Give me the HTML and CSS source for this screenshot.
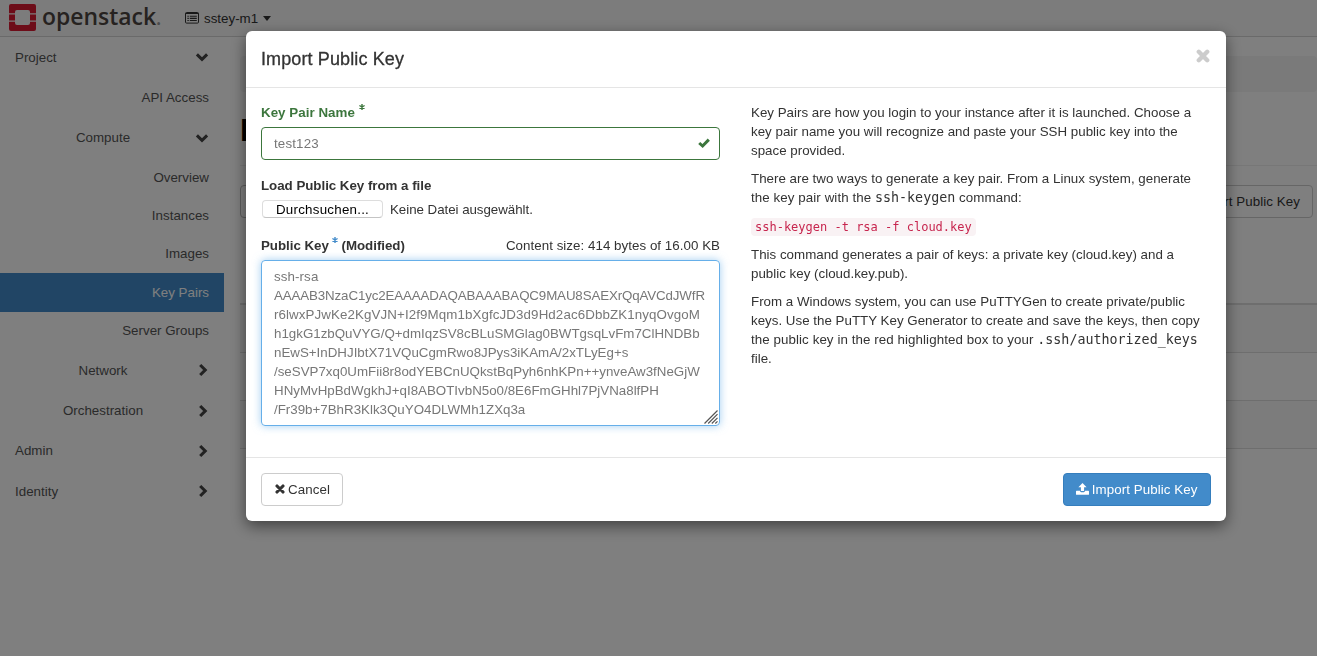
FILE: index.html
```html
<!DOCTYPE html>
<html lang="en">
<head>
<meta charset="utf-8">
<title>Key Pairs - OpenStack Dashboard</title>
<link rel="stylesheet" href="styles.css">
</head>
<body>
<svg class="defs" width="0" height="0">
  <symbol id="down" viewBox="0 0 14 10"><path d="M1.9 2.4 7 7.4 12.1 2.4" fill="none" stroke="currentColor" stroke-width="3"/></symbol>
  <symbol id="right" viewBox="0 0 10 14"><path d="M2.2 2 7.2 7 2.2 12" fill="none" stroke="currentColor" stroke-width="3.1"/></symbol>
  <symbol id="times" viewBox="0 0 14 14"><path d="M2.8 2.8 11.2 11.2M11.2 2.8 2.8 11.2" fill="none" stroke="currentColor" stroke-width="4.4" stroke-linecap="round"/></symbol>
  <symbol id="star" viewBox="0 0 6 6"><path d="M3 0V6M.4 1.5 5.6 4.5M5.6 1.5 .4 4.5" fill="none" stroke="currentColor" stroke-width="1.4"/></symbol>
</svg>

<header class="navbar">
  <svg class="logo-mark" viewBox="0 0 27 27">
    <path fill="#da1a32" d="M2 0H25Q27 0 27 2V9.3H21V8Q21 6 19 6H8Q6 6 6 8V9.3H0V2Q0 0 2 0ZM0 10.5H6V16.5H0ZM21 10.5H27V16.5H21ZM0 17.7H6V19Q6 21 8 21H19Q21 21 21 19V17.7H27V25Q27 27 25 27H2Q0 27 0 25Z"/>
  </svg>
  <span class="logo-text">openstack<i>.</i></span>
  <div class="project-menu">
    <svg class="list-icon" viewBox="0 0 14 12"><rect x=".5" y=".5" width="13" height="10.6" rx="1" fill="none" stroke="currentColor"/><path d="M.5 1.5h13M2.4 4.3h1.4M2.4 6.4h1.4M2.4 8.5h1.4M4.8 4.3h7M4.8 6.4h7M4.8 8.5h7" stroke="currentColor" stroke-width="1.1"/></svg>
    <span>sstey-m1</span>
    <b class="caret"></b>
  </div>
</header>

<div class="page">
  <nav class="sidebar">
    <div class="row top"><span>Project</span><svg class="chev-d"><use href="#down"/></svg></div>
    <a class="row leaf">API Access</a>
    <div class="row group"><span>Compute</span><svg class="chev-d"><use href="#down"/></svg></div>
    <a class="row leaf tight first">Overview</a>
    <a class="row leaf tight">Instances</a>
    <a class="row leaf tight">Images</a>
    <a class="row leaf tight active">Key Pairs</a>
    <a class="row leaf tight">Server Groups</a>
    <div class="row group"><span>Network</span><svg class="chev-r"><use href="#right"/></svg></div>
    <div class="row group"><span>Orchestration</span><svg class="chev-r"><use href="#right"/></svg></div>
    <div class="row top"><span>Admin</span><svg class="chev-r"><use href="#right"/></svg></div>
    <div class="row top"><span>Identity</span><svg class="chev-r"><use href="#right"/></svg></div>
  </nav>
  <main class="content">
    <div class="breadcrumb"></div>
    <h1 class="heading">Key Pairs</h1>
    <div class="toolbar"><div class="filter"></div><button class="btn">Import Public Key</button></div>
    <div class="table"><div></div><div></div><div></div></div>
  </main>
</div>

<div class="backdrop">
  <section class="modal">
    <header class="modal-head"><h3>Import Public Key</h3><svg class="close"><use href="#times"/></svg></header>
    <div class="modal-body">
      <form class="form">
        <div class="label ok">Key Pair Name<svg class="star"><use href="#star"/></svg></div>
        <div class="input"><span>test123</span><svg class="check" viewBox="0 0 12 10"><path d="M1.2 5 4.6 8 10.8 1.6" fill="none" stroke="currentColor" stroke-width="3"/></svg></div>
        <div class="label file-label">Load Public Key from a file</div>
        <div class="file"><span class="browse">Durchsuchen...</span><span class="nofile">Keine Datei ausgewählt.</span></div>
        <div class="key-row"><div class="label">Public Key<svg class="star blue"><use href="#star"/></svg> (Modified)</div><span class="size">Content size: 414 bytes of 16.00 KB</span></div>
        <div class="area"><div class="wide">ssh-rsa</div><div class="narrow">AAAAB3NzaC1yc2EAAAADAQABAAABAQC9MAU8SAEXrQqAVCdJWfR</div><div class="wide">r6lwxPJwKe2KgVJN+I2f9Mqm1bXgfcJD3d9Hd2ac6DbbZK1nyqOvgoM</div><div>h1gkG1zbQuVYG/Q+dmIqzSV8cBLuSMGlag0BWTgsqLvFm7ClHNDBb</div><div>nEwS+InDHJIbtX71VQuCgmRwo8JPys3iKAmA/2xTLyEg+s</div><div>/seSVP7xq0UmFii8r8odYEBCnUQkstBqPyh6nhKPn++ynveAw3fNeGjW</div><div>HNyMvHpBdWgkhJ+qI8ABOTIvbN5o0/8E6FmGHhl7PjVNa8lfPH</div><div>/Fr39b+7BhR3Klk3QuYO4DLWMh1ZXq3a</div>
          <svg class="grip" viewBox="0 0 14 14"><path d="M.5 13.5 13.5 .5M4.2 13.5 13.5 4.2M7.8 13.5 13.5 7.8M11.3 13.5 13.5 11.3" stroke="#555" stroke-width="1.2" fill="none"/></svg>
        </div>
      </form>
      <div class="help">
        <p>Key Pairs are how you login to your instance after it is launched. Choose a<br>key pair name you will recognize and paste your SSH public key into the<br>space provided.</p>
        <p>There are two ways to generate a key pair. From a Linux system, generate<br><span class="loose">the key pair with the <samp>ssh-keygen</samp> command:</span></p>
        <p class="code-line"><code>ssh-keygen -t rsa -f cloud.key</code></p>
        <p>This command generates a pair of keys: a private key (cloud.key) and a<br>public key (cloud.key.pub).</p>
        <p>From a Windows system, you can use PuTTYGen to create private/public<br>keys. Use the PuTTY Key Generator to create and save the keys, then copy<br><span class="loose">the public key in the red highlighted box to your <samp>.ssh/authorized_keys</samp></span><br>file.</p>
      </div>
    </div>
    <footer class="modal-foot">
      <button class="btn cancel"><svg class="x"><use href="#times"/></svg>Cancel</button>
      <button class="btn primary"><svg class="up" viewBox="0 0 13 12"><path fill="currentColor" d="M6.5 0 10.6 4.3H8.1V8H4.9V4.3H2.4ZM.6 7.8H3.9Q4.2 9.2 5.2 9.2H7.8Q8.8 9.2 9.1 7.8H12.4Q13 7.8 13 8.4V11.2Q13 11.8 12.4 11.8H.6Q0 11.8 0 11.2V8.4Q0 7.8 .6 7.8Z"/></svg>Import Public Key</button>
    </footer>
  </section>
</div>
</body>
</html>
```
FILE: styles.css
```css
* { box-sizing: border-box; }
body { margin: 0; height: 656px; overflow: hidden; background: #fff; color: #333; font: 13.33px/19px "Liberation Sans", Arial, sans-serif; letter-spacing: .01px; }
svg { flex: none; overflow: visible; }
.defs { position: absolute; }

.navbar { height: 37px; display: flex; align-items: center; background: #f8f8f8; border-bottom: 1px solid #d5d5d5; padding-left: 9px; }
.logo-mark { width: 27px; height: 27px; margin-top: -1px; }
.logo-text { width: 143px; margin: -2px 0 0 6px; font: 600 24px/34px "Open Sans", sans-serif; letter-spacing: 0; color: #4d4540; transform: scaleX(.955); transform-origin: 0 50%; }
.logo-text i { font-size: 20px; font-style: normal; color: #999; }
.project-menu { display: flex; align-items: center; gap: 5px; }
.list-icon { width: 14px; height: 12px; }
.caret { border: 4.5px solid transparent; border-top: 5px solid #333; border-bottom: 0; }

.page { display: flex; }
.sidebar { width: 224px; display: flex; flex-direction: column; }
.row { height: 40.3px; display: flex; align-items: center; padding: 0 15px; color: #555; }
.row svg { color: #444; }
.top { justify-content: space-between; }
.leaf { justify-content: flex-end; }
.tight { height: 38.3px; }
.first { padding-top: 1px; }
.active { background: #428bca; color: #fff; height: 39px; }
.group { display: grid; grid-template-columns: 1fr 14px; }
.group span { text-align: center; padding-right: 4px; }
.chev-d { width: 14px; height: 10px; }
.chev-r { width: 10px; height: 14px; }
.row .chev-r { margin-right: 1px; }
.group .chev-r { margin-left: 3px; }

.content { flex: 1; padding: 19px 0 0 16px; }
.breadcrumb { height: 36px; background: #f5f5f5; border-radius: 4px; }
.heading { height: 74px; margin: 0; padding-top: 19px; border-bottom: 1px solid #eee; color: #000; font: 700 32px/38px "Liberation Sans", Arial, sans-serif; }
.toolbar { display: flex; justify-content: space-between; padding: 19px 4px 0 0; }
.filter { width: 200px; border: 1px solid #bbb; border-radius: 4px; }
.btn { display: inline-flex; align-items: center; height: 33px; padding: 0 12px; border: 1px solid #ccc; border-radius: 4px; background: #fff; color: #333; font: inherit; letter-spacing: .08px; }
.table { margin-top: 85px; border-top: 2px solid #ddd; }
.table div { height: 48px; border-bottom: 1px solid #ddd; }
.table div:nth-child(odd) { background: #f9f9f9; }

.backdrop { position: fixed; inset: 0; background: rgba(0,0,0,.5); padding: 31px 0 0 246px; }
.modal { width: 979.5px; height: 490px; background: #fff; border-radius: 6px; box-shadow: 0 5px 15px rgba(0,0,0,.5); display: flex; flex-direction: column; }
.modal-head { height: 56.5px; border-bottom: 1px solid #e5e5e5; padding: 1px 16px 0 15px; display: flex; justify-content: space-between; align-items: center; }
.modal-head h3 { margin: 0; font-size: 18px; font-weight: 400; letter-spacing: .12px; -webkit-text-stroke: .3px #333; }
.close { width: 14px; height: 14px; color: #ccc; margin-top: -7px; }
.modal-body { flex: 1; display: flex; padding: 15px 15px 0; gap: 31px; }
.form { width: 459px; }
.label { font-weight: 700; white-space: nowrap; letter-spacing: -.03px; }
.ok { color: #3c763d; letter-spacing: .04px; }
.star { position: relative; top: -7px; width: 6px; height: 6px; margin-left: 4px; }
.blue { color: #428bca; margin-left: 3px; }
.input { margin-top: 5px; height: 33px; border: 1px solid #3c763d; border-radius: 4px; display: flex; align-items: center; justify-content: space-between; padding: 0 9.5px 0 12px; color: #777; letter-spacing: .15px; }
.check { width: 12px; height: 10px; color: #3c763d; }
.file-label { margin-top: 16px; }
.file { display: flex; align-items: center; gap: 7px; height: 19px; margin: 5px 0 0 1px; }
.nofile { letter-spacing: -.04px; }
.browse { width: 121px; height: 18px; border: 1px solid #ddd; border-bottom-color: #c4c4c4; border-radius: 4px; text-align: center; line-height: 17px; color: #000; letter-spacing: .25px; }
.key-row { display: flex; justify-content: space-between; margin-top: 17px; }
.size { letter-spacing: .04px; }
.area { position: relative; margin-top: 5px; height: 166px; border: 1px solid #66afe9; border-radius: 4px; box-shadow: 0 0 8px rgba(102,175,233,.6); padding: 6px 12px; color: #777; white-space: nowrap; letter-spacing: 0; }
.narrow { letter-spacing: -.13px; }
.wide { letter-spacing: .1px; }
.grip { position: absolute; right: 1px; bottom: 1px; width: 14px; height: 14px; }
.help p { margin: 0 0 9.2px; white-space: nowrap; }
.help .code-line { padding-top: 1px; margin-bottom: 9px; }
.loose { letter-spacing: .08px; }
samp, code { font-family: "DejaVu Sans Mono", monospace; letter-spacing: 0; line-height: 1; }
samp { font-size: 13.33px; }
code { font-size: 12px; color: #c7254e; background: #f9f2f4; border-radius: 4px; padding: 2px 4px; }
.modal-foot { height: 64.5px; border-top: 1px solid #e5e5e5; padding: 15px; display: flex; justify-content: space-between; }
.x { width: 10px; height: 10px; margin: 0 3px 0 1px; }
.primary { background: #428bca; border-color: #357ebd; color: #fff; }
.up { width: 13px; height: 12px; margin-right: 3px; }
```
